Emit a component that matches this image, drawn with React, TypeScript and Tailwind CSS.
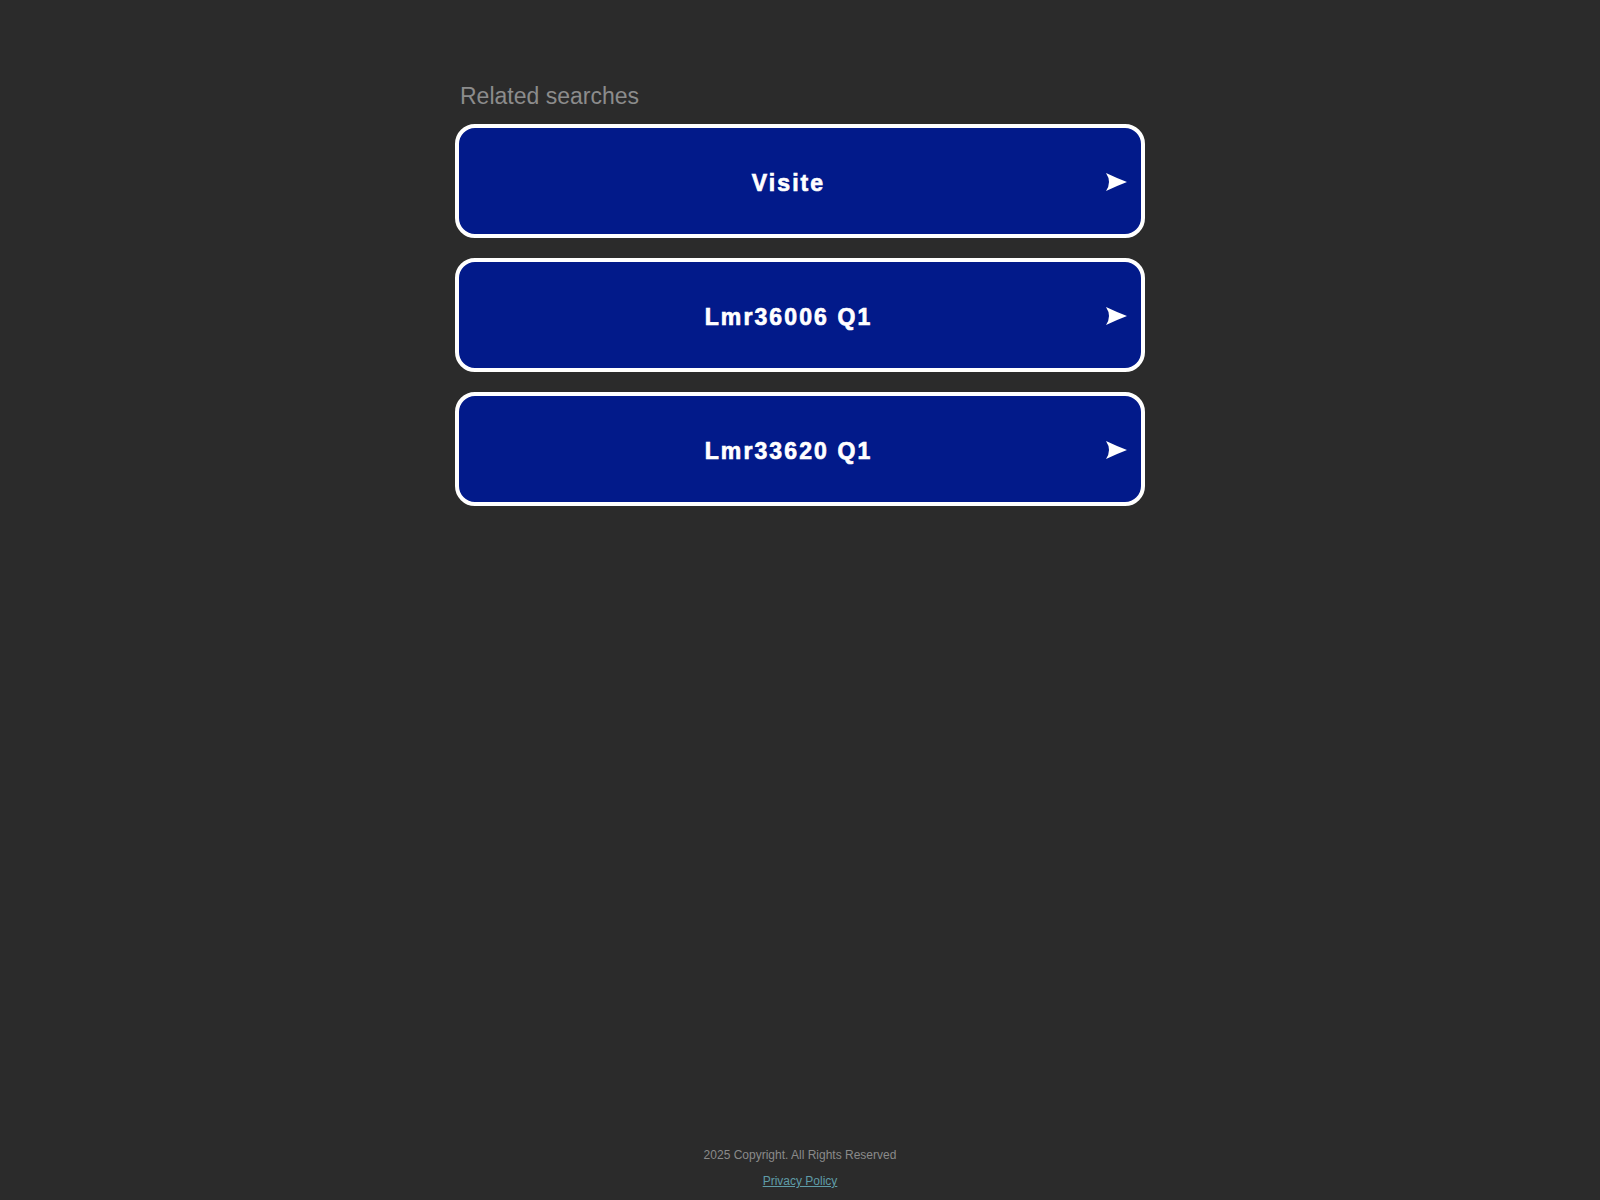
import React from "react";

const items = ["Visite", "Lmr36006 Q1", "Lmr33620 Q1"];

function Arrow() {
  return (
    <svg width="21" height="18" viewBox="0 0 21 18" className="shrink-0 mt-[2px]">
      <path d="M0 0 Q10 4.8 21 9 Q10 13.2 0 18 Q6 9 0 0 Z" fill="#ffffff" />
    </svg>
  );
}

export default function App() {
  return (
    <div className="min-h-[1200px] bg-[#2b2b2b] flex flex-col items-center font-['Liberation_Sans',Arial,sans-serif]">
      <div className="w-[690px] pt-[83px]">
        <div className="text-[23px] leading-[26px] text-[#8c8c8c] pl-[5px] mb-[15px]">
          Related searches
        </div>
        <div className="flex flex-col gap-[20px]">
          {items.map((t) => (
            <a
              key={t}
              href="#"
              className="h-[114px] flex items-center bg-[#021a8a] border-[4px] border-white rounded-[20px] pl-[12px] pr-[14px]"
            >
              <span className="flex-1 text-center text-white font-bold text-[23px] tracking-[2.1px] pt-[4px] [-webkit-text-stroke:0.7px_#ffffff]">
                {t}
              </span>
              <Arrow />
            </a>
          ))}
        </div>
      </div>
      <footer className="mt-auto flex flex-col items-center pb-[10px] text-[12px]">
        <div className="leading-[18px] text-[#8a8a8a]">2025 Copyright. All Rights Reserved</div>
        <a href="#" className="mt-[8px] leading-[18px] text-[#5f9ca8] underline">
          Privacy Policy
        </a>
      </footer>
    </div>
  );
}
